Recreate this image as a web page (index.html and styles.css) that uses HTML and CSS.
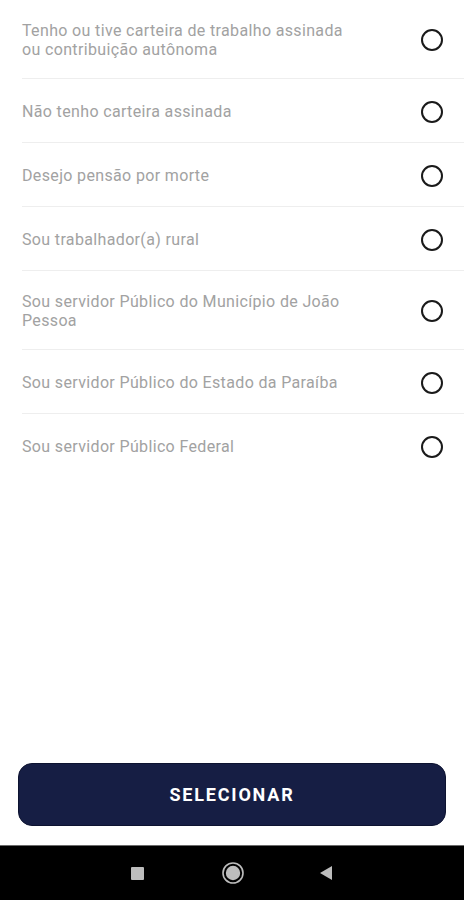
FILE: index.html
```html
<html>
  <head>
    <meta charset="utf-8">
    <link rel="stylesheet" href="styles.css">
  </head>
  <body>
    <div class="screen">
      <form class="option-list">
        <label class="option-row">
          <span class="option-text">Tenho ou tive carteira de trabalho assinada ou contribuição autônoma</span>
          <input type="radio" name="tipo" class="option-radio">
        </label>
        <label class="option-row">
          <span class="option-text">Não tenho carteira assinada</span>
          <input type="radio" name="tipo" class="option-radio">
        </label>
        <label class="option-row">
          <span class="option-text">Desejo pensão por morte</span>
          <input type="radio" name="tipo" class="option-radio">
        </label>
        <label class="option-row">
          <span class="option-text">Sou trabalhador(a) rural</span>
          <input type="radio" name="tipo" class="option-radio">
        </label>
        <label class="option-row">
          <span class="option-text">Sou servidor Público do Município de João Pessoa</span>
          <input type="radio" name="tipo" class="option-radio">
        </label>
        <label class="option-row">
          <span class="option-text">Sou servidor Público do Estado da Paraíba</span>
          <input type="radio" name="tipo" class="option-radio">
        </label>
        <label class="option-row last">
          <span class="option-text">Sou servidor Público Federal</span>
          <input type="radio" name="tipo" class="option-radio">
        </label>
      </form>

      <div class="footer">
        <button type="button" class="select-button">SELECIONAR</button>
      </div>

      <div class="nav-bar">
        <span class="nav-square"></span>
        <svg class="nav-home" width="24" height="24" viewBox="0 0 24 24">
          <circle cx="12" cy="12" r="10" fill="none" stroke="#bdbdbd" stroke-width="1.6"/>
          <circle cx="12" cy="12" r="7.2" fill="#bdbdbd"/>
        </svg>
        <svg class="nav-back" width="14" height="16" viewBox="0 0 14 16">
          <polygon points="13,1 13,15 1,8" fill="#bdbdbd"/>
        </svg>
      </div>
    </div>
  </body>
</html>
```

FILE: styles.css
```css
html, body{
  margin: 0;
  padding: 0;
  background: #fff;
}
.screen{
  display: flex;
  flex-direction: column;
  height: 900px;
  font-family: Roboto, "Liberation Sans", Arial, sans-serif;
}
.option-list{
  margin: 0;
  flex: 1;
}
.option-row{
  display: flex;
  align-items: center;
  min-height: 63px;
  margin-left: 22px;
  border-bottom: 1px solid #eeeeee;
  cursor: pointer;
}
.option-row.last{
  border-bottom: none;
}
.option-text{
  flex: 1;
  padding: 21px 0 19px 0;
  margin-right: 62px;
  font-size: 16px;
  line-height: 19px;
  letter-spacing: 0.35px;
  color: #a2a2a2;
}
.option-radio{
  appearance: none;
  -webkit-appearance: none;
  box-sizing: border-box;
  width: 22px;
  height: 22px;
  margin: 2px 21px 0 0;
  border: 2px solid #1a1a1a;
  border-radius: 50%;
  background: #fff;
}
.option-radio:checked{
  background: radial-gradient(circle, #1a1a1a 0 5px, #fff 6px);
}
.footer{
  padding: 0 18px 19px 18px;
}
.select-button{
  display: block;
  width: 100%;
  height: 63px;
  border: 1px solid #0d1330;
  border-radius: 14px;
  background: #161e44;
  color: #fff;
  font-family: Roboto, "Liberation Sans", Arial, sans-serif;
  font-size: 18px;
  font-weight: bold;
  letter-spacing: 1.8px;
}
.nav-bar{
  height: 54px;
  background: #000;
  border-top: 1px solid #6a6a6a;
  display: flex;
  align-items: center;
  justify-content: center;
}
.nav-square{
  width: 13px;
  height: 13px;
  background: #bdbdbd;
  border-radius: 1px;
}
.nav-home{
  margin-left: 77px;
}
.nav-back{
  margin-left: 74px;
}
```
